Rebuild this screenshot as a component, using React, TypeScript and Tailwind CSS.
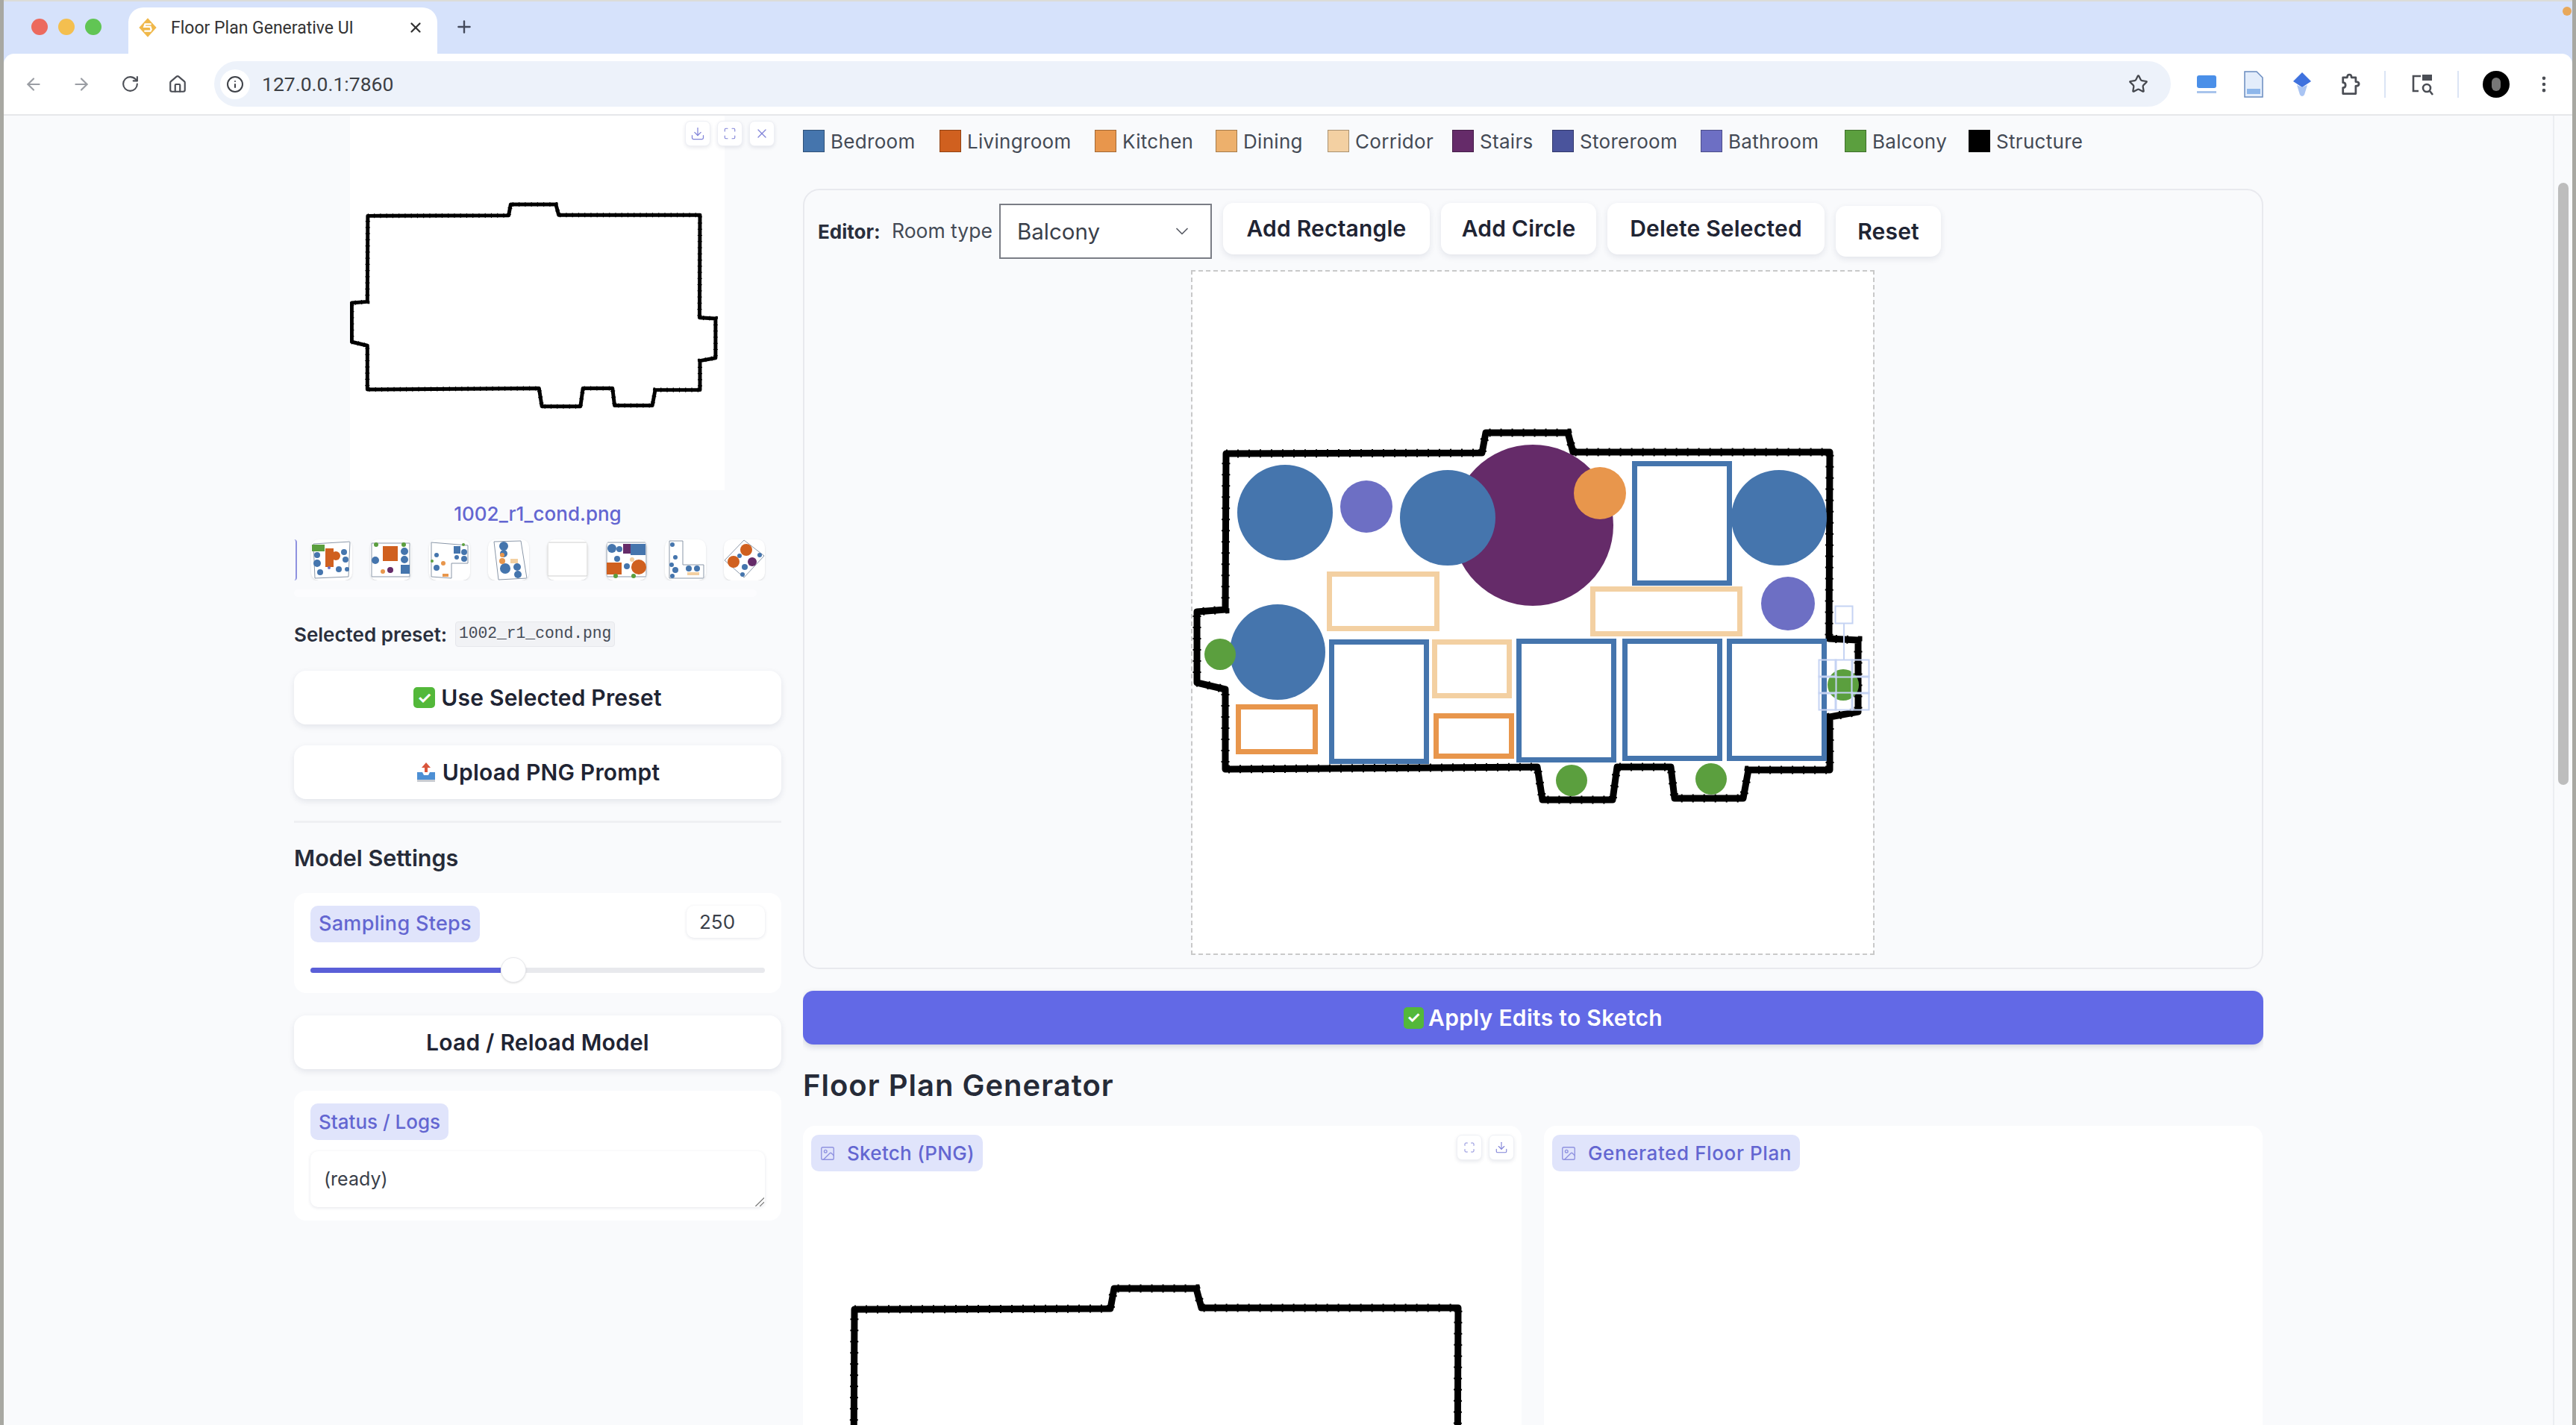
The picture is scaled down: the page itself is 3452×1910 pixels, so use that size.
import type { ReactNode } from 'react';
import { ArrowLeft, ArrowRight, RotateCw, Home, Info, Star, EllipsisVertical, ChevronDown, Download, Maximize, X, Plus, Image } from 'lucide-react';

const OUTLINE =
  '47,246 390,245 395,218 505,218 512,244 856,244 855,494 894,496 894,592 856,599 856,670 747,670 740,708 648,708 643,666 571,666 565,710 471,710 464,666 46,669 46,562 8,553 8,458 46,455';

const LEGEND = [
  { name: 'Bedroom', color: 'bg-[#4575ad]', width: 'w-[116px]' },
  { name: 'Livingroom', color: 'bg-[#d0601f]', width: 'w-[141px]' },
  { name: 'Kitchen', color: 'bg-[#e8964c]', width: 'w-[95px]' },
  { name: 'Dining', color: 'bg-[#edb06c]', width: 'w-[83px]' },
  { name: 'Corridor', color: 'bg-[#f3d0a2]', width: 'w-[100px]' },
  { name: 'Stairs', color: 'bg-[#652b69]', width: 'w-[67px]' },
  { name: 'Storeroom', color: 'bg-[#4a549c]', width: 'w-[132px]' },
  { name: 'Bathroom', color: 'bg-[#6d6fc4]', width: 'w-[126px]' },
  { name: 'Balcony', color: 'bg-[#5b9f3e]', width: 'w-[99px]' },
  { name: 'Structure', color: 'bg-black', width: 'w-[118px]' },
];

const CIRCLES = [
  { x: 126, y: 325, r: 64, fill: '#4575ad' },
  { x: 235, y: 317, r: 35, fill: '#6d6fc4' },
  { x: 458, y: 342, r: 108, fill: '#652b69' },
  { x: 344, y: 332, r: 64, fill: '#4575ad' },
  { x: 548, y: 299, r: 35, fill: '#e8964c' },
  { x: 788, y: 332, r: 64, fill: '#4575ad' },
  { x: 800, y: 447, r: 36, fill: '#6d6fc4' },
  { x: 116, y: 512, r: 64, fill: '#4575ad' },
  { x: 39, y: 515, r: 21, fill: '#5b9f3e' },
  { x: 510, y: 684, r: 21, fill: '#5b9f3e' },
  { x: 697, y: 682, r: 21, fill: '#5b9f3e' },
  { x: 874, y: 556, r: 21, fill: '#5b9f3e' },
];

const RECTS = [
  { x: 591, y: 256, w: 134, h: 167, stroke: '#4575ad' },
  { x: 182, y: 404, w: 151, h: 80, stroke: '#f3d0a2' },
  { x: 535, y: 424, w: 204, h: 67, stroke: '#f3d0a2' },
  { x: 185, y: 495, w: 134, h: 167, stroke: '#4575ad' },
  { x: 323, y: 495, w: 107, h: 79, stroke: '#f3d0a2' },
  { x: 325, y: 594, w: 108, h: 61, stroke: '#e8964c' },
  { x: 60, y: 582, w: 110, h: 67, stroke: '#e8964c' },
  { x: 436, y: 494, w: 134, h: 166, stroke: '#4575ad' },
  { x: 578, y: 494, w: 134, h: 164, stroke: '#4575ad' },
  { x: 718, y: 494, w: 134, h: 164, stroke: '#4575ad' },
];

// selection handles around the selected balcony circle
const HANDLES = [
  [853, 534], [875, 534], [897, 534],
  [853, 556], [897, 556],
  [853, 578], [875, 578], [897, 578],
  [875, 462],
];

const BLUE = '#4575ad';
const ORANGE = '#d0601f';
const LIGHT = '#e8964c';
const CORRIDOR = '#f3d0a2';
const PURPLE = '#652b69';
const GREEN = '#5b9f3e';

type Blob = { x: number; y: number; r?: number; w?: number; h?: number; c: string };

const THUMBS: { outline: string; blobs: Blob[] }[] = [
  {
    outline: '3,6 52,3 50,50 5,52',
    blobs: [
      { x: 1, y: 7, w: 17, h: 9, c: GREEN }, { x: 19, y: 12, w: 11, h: 25, c: ORANGE }, { x: 33, y: 22, r: 6, c: ORANGE },
      { x: 8, y: 21, r: 4, c: BLUE }, { x: 8, y: 32, r: 5, c: BLUE }, { x: 12, y: 44, r: 4, c: BLUE }, { x: 44, y: 17, r: 4, c: BLUE },
      { x: 46, y: 27, r: 4, c: BLUE }, { x: 37, y: 40, r: 4, c: BLUE }, { x: 48, y: 40, r: 3, c: BLUE }, { x: 24, y: 38, r: 2, c: '#6d6fc4' },
    ],
  },
  {
    outline: '2,5 53,5 53,50 2,50',
    blobs: [
      { x: 17, y: 9, w: 20, h: 20, c: ORANGE }, { x: 46, y: 16, r: 5, c: BLUE }, { x: 46, y: 27, r: 5, c: BLUE }, { x: 41, y: 34, w: 12, h: 12, c: BLUE },
      { x: 7, y: 28, r: 5, c: BLUE }, { x: 27, y: 41, r: 4, c: PURPLE }, { x: 8, y: 7, r: 3, c: GREEN }, { x: 45, y: 7, r: 3, c: GREEN }, { x: 17, y: 43, r: 3, c: LIGHT },
    ],
  },
  {
    outline: '3,4 52,8 52,32 30,32 30,52 3,50',
    blobs: [
      { x: 10, y: 21, r: 3, c: BLUE }, { x: 10, y: 38, r: 4, c: BLUE }, { x: 33, y: 9, w: 9, h: 10, c: BLUE }, { x: 47, y: 17, r: 4, c: BLUE },
      { x: 47, y: 26, r: 4, c: BLUE }, { x: 37, y: 24, r: 3, c: BLUE }, { x: 19, y: 32, r: 3, c: LIGHT }, { x: 18, y: 46, w: 8, h: 4, c: LIGHT },
      { x: 46, y: 7, r: 2, c: GREEN }, { x: 4, y: 29, r: 2, c: GREEN },
    ],
  },
  {
    outline: '8,3 44,2 52,52 14,54',
    blobs: [
      { x: 21, y: 9, r: 6, c: BLUE }, { x: 21, y: 19, r: 5, c: BLUE }, { x: 23, y: 39, r: 7, c: BLUE }, { x: 39, y: 37, r: 5, c: BLUE },
      { x: 40, y: 47, r: 5, c: BLUE }, { x: 19, y: 21, r: 3, c: LIGHT }, { x: 19, y: 29, r: 4, c: LIGHT }, { x: 30, y: 26, w: 10, h: 6, c: CORRIDOR },
    ],
  },
  { outline: '1,4 54,4 54,49 1,49', blobs: [] },
  {
    outline: '1,4 54,4 54,50 1,50',
    blobs: [
      { x: 8, y: 12, r: 6, c: BLUE }, { x: 18, y: 13, r: 4, c: BLUE }, { x: 23, y: 6, w: 10, h: 13, c: PURPLE }, { x: 33, y: 6, w: 20, h: 15, c: BLUE },
      { x: 1, y: 31, w: 20, h: 16, c: ORANGE }, { x: 44, y: 37, r: 10, c: ORANGE }, { x: 28, y: 36, r: 4, c: BLUE }, { x: 15, y: 26, r: 4, c: BLUE },
      { x: 35, y: 27, r: 3, c: CORRIDOR }, { x: 13, y: 49, r: 3, c: GREEN }, { x: 37, y: 49, r: 3, c: GREEN },
    ],
  },
  {
    outline: '6,2 24,2 24,34 52,34 52,52 6,52',
    blobs: [
      { x: 10, y: 7, r: 3, c: BLUE }, { x: 14, y: 24, r: 3, c: BLUE }, { x: 9, y: 34, r: 3, c: BLUE }, { x: 14, y: 41, r: 4, c: BLUE }, { x: 10, y: 49, r: 3, c: BLUE },
      { x: 32, y: 39, r: 4, c: BLUE }, { x: 43, y: 39, r: 4, c: BLUE }, { x: 30, y: 44, w: 16, h: 4, c: CORRIDOR },
    ],
  },
  {
    outline: '27,1 54,22 27,51 1,28',
    blobs: [
      { x: 30, y: 14, r: 8, c: ORANGE }, { x: 13, y: 30, r: 8, c: ORANGE }, { x: 38, y: 30, r: 6, c: PURPLE }, { x: 48, y: 21, r: 3, c: BLUE },
      { x: 28, y: 37, r: 4, c: BLUE }, { x: 25, y: 47, r: 3, c: BLUE }, { x: 21, y: 22, r: 3, c: BLUE },
    ],
  },
];

function Outline({ stroke = 9, viewBox = '0 0 916 916', children }: { stroke?: number; viewBox?: string; children?: ReactNode }) {
  return (
    <svg viewBox={viewBox} className="block w-full h-full bg-white">
      <polygon points={OUTLINE} fill="none" stroke="#000" strokeWidth={stroke} strokeLinejoin="round" />
      {/* rough ticks along the hand-drawn wall line */}
      <polygon points={OUTLINE} fill="none" stroke="#000" strokeWidth={stroke + 2} strokeDasharray="2 13" />
      {children}
    </svg>
  );
}

function Chip({ label, icon, text = 'text-[27px] tracking-[0.3px]' }: { label: string; icon?: boolean; text?: string }) {
  return (
    <div className={`flex items-center bg-[#e0e4fb] text-[#6366d1] rounded-[10px] font-medium h-[49px] px-[11px] whitespace-nowrap ${icon ? 'gap-[15px]' : ''} ${text}`}>
      {icon && <Image size={22} strokeWidth={1.5} className="text-[#8f92e0]" />}
      {label}
    </div>
  );
}

function IconButton({ children }: { children: ReactNode }) {
  return (
    <div className="flex items-center justify-center w-[34px] h-[34px] bg-white rounded-[7px] border border-[#eef0f5] shadow-[0_2px_5px_rgba(30,40,80,0.10)] text-[#8083d8]">
      {children}
    </div>
  );
}

function WhiteButton({ children }: { children: ReactNode }) {
  return (
    <button className="w-full h-[72px] bg-white rounded-[16px] shadow-[0_3px_8px_rgba(30,40,80,0.10)] text-[30px] tracking-[0.2px] font-semibold text-[#1f2433] flex items-center justify-center gap-[8px]">
      {children}
    </button>
  );
}

function ToolButton({ label, className }: { label: string; className: string }) {
  return (
    <button className={`bg-white rounded-[14px] shadow-[0_3px_8px_rgba(30,40,80,0.10)] text-[30px] tracking-[0.2px] font-semibold text-[#1f2433] flex items-center justify-center ${className}`}>
      {label}
    </button>
  );
}

function CheckEmoji({ size }: { size: string }) {
  return (
    <span className={`inline-flex items-center justify-center rounded-[5px] bg-[#53b83a] text-white font-bold ${size}`}>✓</span>
  );
}

function BrowserChrome() {
  return (
    <div className="shrink-0 h-[155px] flex flex-col bg-[#d6e2fb] border-t-2 border-[#dcdcd8]">
      <div className="h-[70px] flex items-end pl-[36px] relative">
        <div className="flex items-center gap-[14px] h-[70px] pb-[2px] pl-[1px]">
          <span className="w-[22px] h-[22px] rounded-full bg-[#ec6a5e]" />
          <span className="w-[22px] h-[22px] rounded-full bg-[#f4bf4f]" />
          <span className="w-[22px] h-[22px] rounded-full bg-[#61c554]" />
        </div>
        <div className="ml-[36px] w-[414px] h-[62px] bg-white rounded-t-[20px] flex items-center pl-[12px] pr-[18px] pb-[8px]">
          <svg viewBox="0 0 24 24" className="w-[28px] h-[28px]">
            <path d="M12 1 L22 12 L12 23 L2 12 Z" fill="#f0b84a" />
            <path d="M16 8 H9 L8 11 H15 L16 14 L15 16 H8" fill="none" stroke="#fff" strokeWidth="2" />
          </svg>
          <span className="ml-[17px] text-[23px] text-[#333] font-['Roboto',sans-serif] leading-none">Floor Plan Generative UI</span>
          <X size={22} strokeWidth={2.5} className="ml-auto text-[#333]" />
        </div>
        <Plus size={26} strokeWidth={2.2} className="ml-[23px] mb-[23px] text-[#444a5c]" />
        <span className="absolute right-[1px] top-[7px] w-[12px] h-[12px] rounded-full bg-[#e8a85a]" />
      </div>
      <div className="h-[83px] bg-white rounded-t-[14px] flex items-center border-b-2 border-[#e6e7ea] pl-[27px]">
        <ArrowLeft size={26} className="text-[#9a9da3]" />
        <ArrowRight size={26} className="ml-[38px] text-[#9a9da3]" />
        <RotateCw size={25} className="ml-[40px] text-[#4b4e55]" />
        <Home size={26} className="ml-[38px] text-[#4b4e55]" />
        <div className="ml-[36px] w-[2622px] h-[61px] rounded-full bg-[#edf2fa] flex items-center pl-[8px] pr-[30px]">
          <span className="w-[40px] h-[40px] bg-white rounded-full flex items-center justify-center">
            <Info size={24} className="text-[#3f4248]" />
          </span>
          <span className="ml-[16px] text-[26.5px] text-[#3c3f45] font-['Roboto',sans-serif]">127.0.0.1:7860</span>
          <Star size={27} className="ml-auto text-[#44474d]" />
        </div>
        <div className="ml-[34px] flex items-center">
          <svg viewBox="0 0 28 28" className="w-[28px] h-[28px]">
            <rect x="1" y="2" width="26" height="17" rx="3" fill="#4a8fe8" />
            <rect x="1" y="23" width="26" height="3" fill="#a8c4ec" />
          </svg>
          <svg viewBox="0 0 26 36" className="ml-[36px] w-[26px] h-[36px]">
            <path d="M1 1 H17 L25 9 V35 H1 Z" fill="#e3edfb" stroke="#6a8cc0" strokeWidth="1.5" />
            <rect x="4" y="24" width="18" height="7" fill="#8db6ea" />
          </svg>
          <svg viewBox="0 0 26 34" className="ml-[39px] w-[26px] h-[34px]">
            <path d="M13 1 L25 13 L13 21 L1 13 Z" fill="#3f72de" />
            <path d="M6 18 L13 21 L20 18 L16 31 Q13 35 10 31 Z" fill="#a9c4f3" />
          </svg>
          <svg viewBox="0 0 28 28" className="ml-[36px] w-[32px] h-[32px]" fill="none" stroke="#4b4e55" strokeWidth="2.4" strokeLinejoin="round">
            <path d="M5 6 H10 C10 1.5 15 1.5 15 6 H20 V11 C25 11 25 16 20 16 V25 H5 V18 C9 18 9 12 5 12 Z" />
          </svg>
          <span className="ml-[29px] w-[2px] h-[36px] bg-[#dbe4f5]" />
          <svg viewBox="0 0 32 32" className="ml-[33px] w-[32px] h-[32px]" fill="none" stroke="#4b4e55" strokeWidth="2.6">
            <path d="M14 5 H4 V25 H11" />
            <rect x="16" y="3" width="13" height="8" fill="#4b4e55" stroke="none" />
            <circle cx="22" cy="21" r="5" />
            <path d="M26 25 L30 30" />
          </svg>
          <span className="ml-[31px] w-[2px] h-[36px] bg-[#dbe4f5]" />
          <span className="ml-[32px] w-[36px] h-[36px] rounded-full bg-black flex items-center justify-center">
            <span className="w-[12px] h-[18px] rounded-full bg-[#777]" />
          </span>
          <EllipsisVertical size={28} className="ml-[32px] text-[#4b4e55]" />
        </div>
      </div>
    </div>
  );
}

function Sidebar() {
  return (
    <div className="w-[653px] shrink-0 flex flex-col">
      <div className="relative h-[502px]">
        <div className="ml-[75px] w-[502px] h-[502px] overflow-hidden bg-white">
          <div className="w-[504px] h-[504px] mt-[-1px] ml-[-2px]">
            <Outline stroke={9} />
          </div>
        </div>
        <div className="absolute right-[9px] top-[7px] flex gap-[9px]">
          <IconButton><Download size={20} strokeWidth={1.5} /></IconButton>
          <IconButton><Maximize size={18} strokeWidth={1.5} /></IconButton>
          <IconButton><X size={20} strokeWidth={1.5} /></IconButton>
        </div>
      </div>
      <div className="mt-[15px] h-[38px] text-center text-[26px] font-medium text-[#6366d1] leading-[34px]">1002_r1_cond.png</div>
      <div className="h-[68px] flex items-end overflow-hidden">
        <span className="w-[4px] h-[55px] rounded-r-[8px] border-r-2 border-[#8f92e0]" />
        <div className="flex gap-[24px] ml-[19px]">
          {THUMBS.map((thumb, i) => (
            <svg key={i} viewBox="0 0 55 55" className="w-[55px] h-[55px] rounded-[10px] bg-white shadow-sm">
              <polygon points={thumb.outline} fill="none" stroke={thumb.blobs.length ? '#8a97a8' : '#cfcfcf'} strokeWidth="1" />
              {thumb.blobs.map((b, j) =>
                b.r ? (
                  <circle key={j} cx={b.x} cy={b.y} r={b.r} fill={b.c} />
                ) : (
                  <rect key={j} x={b.x} y={b.y} width={b.w} height={b.h} fill={b.c} />
                ),
              )}
            </svg>
          ))}
        </div>
      </div>
      <div className="mt-[12px] w-[620px] h-[10px] rounded-full bg-[#fcfcfe]" />
      <div className="mt-[33px] flex items-center h-[34px]">
        <span className="text-[26px] font-semibold text-[#2a2f3d]">Selected preset:</span>
        <code className="ml-[11px] h-[34px] w-[214px] flex items-center justify-center bg-[#f1f2f5] border border-[#e6e7ec] rounded-[4px] text-[21.3px] text-[#444a55] font-['Liberation_Mono',monospace]">1002_r1_cond.png</code>
      </div>
      <div className="mt-[32px] flex flex-col gap-[28px]">
        <WhiteButton><CheckEmoji size="w-[29px] h-[28px] text-[22px]" /> Use Selected Preset</WhiteButton>
        <WhiteButton>
          <svg viewBox="0 0 28 28" className="w-[28px] h-[28px]">
            <path d="M14 1 L20 8 H16 V14 H12 V8 H8 Z" fill="#d9553b" />
            <path d="M2 14 H9 L11 18 H17 L19 14 H26 V25 H2 Z" fill="#4d8fd4" />
            <rect x="2" y="24" width="24" height="3" fill="#c9ccd2" />
          </svg>
          Upload PNG Prompt
        </WhiteButton>
      </div>
      <div className="mt-[29px] h-[3px] bg-[#eff0f3]" />
      <div className="mt-[29px] text-[30.5px] font-semibold text-[#262b38] leading-[36px]">Model Settings</div>
      <div className="mt-[29px] h-[134px] bg-white rounded-[16px] px-[22px] pt-[17px]">
        <div className="flex justify-between items-start">
          <Chip label="Sampling Steps" />
          <div className="w-[105px] h-[43px] bg-white rounded-[10px] shadow-[0_1px_4px_rgba(30,40,80,0.12)] flex items-center pl-[17px] text-[26px] text-[#3a3f4a]">250</div>
        </div>
        <div className="mt-[20px] h-[34px] flex items-center relative">
          <div className="w-full h-[7px] rounded-full bg-[#e8e9ed] overflow-hidden">
            <div className="w-[255px] h-full bg-[#5a5fd8]" />
          </div>
          <span className="absolute left-[255px] w-[34px] h-[34px] rounded-full bg-white border border-[#e8e9ed] shadow-sm" />
        </div>
      </div>
      <div className="mt-[30px]">
        <WhiteButton>Load / Reload Model</WhiteButton>
      </div>
      <div className="mt-[29px] h-[174px] bg-white rounded-[16px] px-[22px] pt-[17px]">
        <div className="flex">
          <Chip label="Status / Logs" text="text-[26px]" />
        </div>
        <div className="mt-[15px] h-[75px] relative bg-white rounded-[10px] shadow-[0_1px_4px_rgba(30,40,80,0.12)] pl-[18px] flex items-center text-[25px] text-[#3a3f4a]">
          (ready)
          <svg viewBox="0 0 12 12" className="absolute right-[1px] bottom-[1px] w-[14px] h-[14px]" stroke="#777" strokeWidth="1">
            <path d="M2 12 L12 2 M7 12 L12 7" />
          </svg>
        </div>
      </div>
    </div>
  );
}

function SketchCanvas() {
  return (
    <div className="mx-auto mt-[15px] w-[916px] h-[918px] border-2 border-dashed border-[#c9c9c9]">
      <Outline viewBox="2 2 912 914">
        {CIRCLES.map((c, i) => (
          <circle key={i} cx={c.x} cy={c.y} r={c.r} fill={c.fill} />
        ))}
        {RECTS.map((r, i) => (
          <rect key={i} x={r.x + 3.5} y={r.y + 3.5} width={r.w - 7} height={r.h - 7} fill="none" stroke={r.stroke} strokeWidth="7" />
        ))}
        <line x1="875" y1="474" x2="875" y2="523" stroke="#c5d3f3" strokeWidth="2" />
        {HANDLES.map(([x, y], i) => (
          <rect key={i} x={x - 11.5} y={y - 11.5} width="23" height="23" fill="none" stroke="#c5d3f3" strokeWidth="2" />
        ))}
      </Outline>
    </div>
  );
}

function Editor() {
  return (
    <div className="mt-[49px] shrink-0 h-[1046px] border-2 border-[#e8e9ee] rounded-[22px] pl-[18px] pr-[19px] pt-[18px]">
      <div className="flex items-start h-[74px]">
        <span className="self-center text-[26px] font-bold text-[#2a2f3d] w-[99px]">Editor:</span>
        <span className="self-center text-[26.5px] text-[#444a55] w-[144px] whitespace-nowrap">Room type</span>
        <div className="w-[285px] h-[74px] bg-white border-2 border-[#7a7d85] flex items-center pl-[22px] pr-[24px] text-[29.5px] text-[#3a3f4a]">
          Balcony
          <ChevronDown size={28} strokeWidth={1.5} className="ml-auto text-[#5a5d66]" />
        </div>
        <div className="ml-[15px] mt-[-1px] flex gap-[15px] items-start">
          <ToolButton label="Add Rectangle" className="w-[277px] h-[69px]" />
          <ToolButton label="Add Circle" className="w-[208px] h-[69px]" />
          <ToolButton label="Delete Selected" className="w-[291px] h-[69px]" />
          <ToolButton label="Reset" className="w-[141px] h-[68px] mt-[4px]" />
        </div>
      </div>
      <SketchCanvas />
    </div>
  );
}

function Results() {
  return (
    <div className="mt-[31px] flex gap-[30px]">
      <div className="relative w-[963px] h-[500px] bg-white rounded-[16px] overflow-hidden">
        <div className="w-[916px] h-[916px] ml-[22px]">
          <Outline />
        </div>
        <div className="absolute left-[11px] top-[12px]">
          <Chip label="Sketch (PNG)" icon text="text-[26px] tracking-[0.3px]" />
        </div>
        <div className="absolute right-[10px] top-[12px] flex gap-[9px]">
          <IconButton><Maximize size={16} strokeWidth={1.5} /></IconButton>
          <IconButton><Download size={18} strokeWidth={1.5} /></IconButton>
        </div>
      </div>
      <div className="w-[963px] h-[500px] bg-white rounded-[16px] pl-[11px] pt-[12px]">
        <div className="flex">
          <Chip label="Generated Floor Plan" icon text="text-[26px] tracking-[0.6px]" />
        </div>
      </div>
    </div>
  );
}

export default function App() {
  return (
    <div className="w-[3452px] h-[1910px] overflow-hidden flex flex-col bg-[#f9fafc] border-x-[5px] border-[#a8a8a2] font-['Inter',sans-serif]">
      <BrowserChrome />
      <div className="flex-1 min-h-0 flex overflow-hidden">
        <div className="w-[3416px] shrink-0 flex pl-[389px]">
          <Sidebar />
          <div className="ml-[29px] w-[1957px] flex flex-col overflow-hidden">
            <div className="mt-[19px] shrink-0 h-[30px] flex items-center gap-[30px]">
              {LEGEND.map((item) => (
                <div key={item.name} className="flex items-center gap-[8px]">
                  <span className={`w-[29px] h-[30px] border border-black/30 ${item.color}`} />
                  <span className={`text-[26px] tracking-[0.3px] text-[#444a55] whitespace-nowrap ${item.width}`}>{item.name}</span>
                </div>
              ))}
            </div>
            <Editor />
            <button className="mt-[29px] shrink-0 h-[72px] w-full rounded-[14px] bg-[#6269e6] text-white text-[30px] tracking-[0.3px] font-semibold shadow-[0_3px_8px_rgba(30,40,80,0.18)] flex items-center justify-center gap-[6px]">
              <CheckEmoji size="w-[27px] h-[29px] text-[21px]" /> Apply Edits to Sketch
            </button>
            <h2 className="mt-[32px] shrink-0 text-[40px] tracking-[1px] font-semibold text-[#262b38] leading-[46px]">Floor Plan Generator</h2>
            <Results />
          </div>
        </div>
        <div className="flex-1 relative border-l-2 border-[#eceef2]">
          <div className="absolute left-[5px] top-[90px] w-[14px] h-[807px] rounded-full bg-[#bdbdbd]" />
        </div>
      </div>
    </div>
  );
}
